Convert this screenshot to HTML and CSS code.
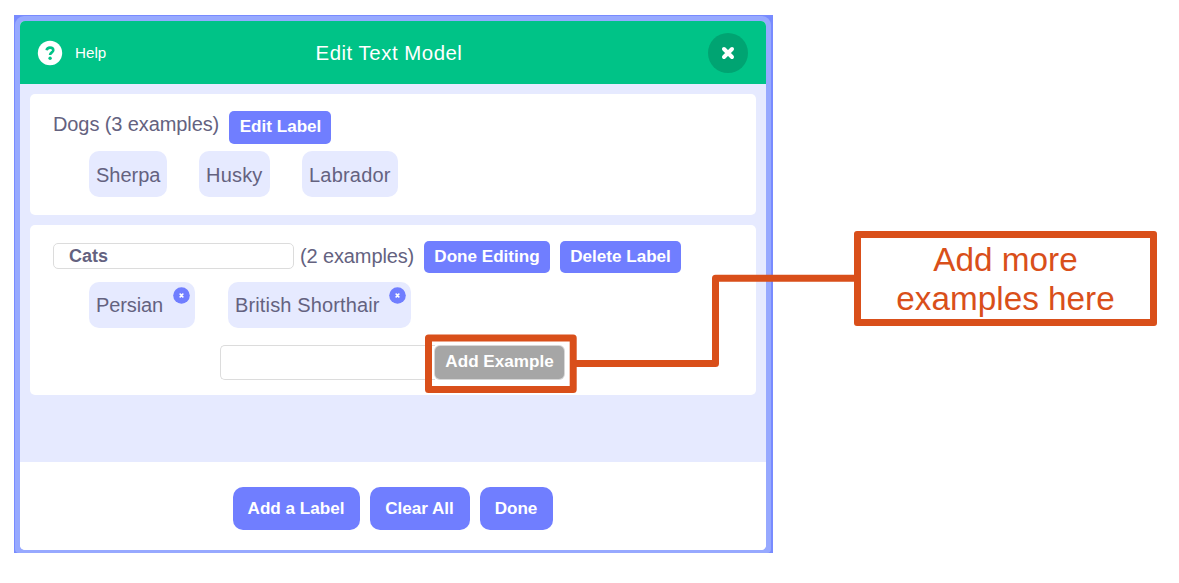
FILE: index.html
```html
<!DOCTYPE html>
<html lang="en">
<head>
<meta charset="utf-8">
<title>Edit Text Model</title>
<link rel="stylesheet" href="styles.css">
</head>
<body>
<div class="frame">
  <div class="rim">
    <main class="modal">
      <header class="header">
        <div class="help">
          <svg class="help-icon" width="26" height="26" viewBox="0 0 26 26"><circle cx="13" cy="13" r="12.2" fill="#fff"/><path d="M9.6 10.3C10 8.4 11.2 7.6 13 7.6C15.1 7.6 16.3 8.7 16.3 10.2C16.3 12.3 13.1 12.5 13.1 15" fill="none" stroke="#00c387" stroke-width="2.6"/><circle cx="13.1" cy="18.2" r="1.7" fill="#00c387"/></svg>
          <span>Help</span>
        </div>
        <h1 class="title">Edit Text Model</h1>
        <div class="close"><svg width="14" height="14" viewBox="0 0 14 14"><path d="M3 3L11 11M11 3L3 11" stroke="#fff" stroke-width="4" stroke-linecap="round"/></svg></div>
      </header>
      <div class="content">
        <section class="card card-dogs">
          <div class="row"><span class="count">Dogs (3 examples)</span><button class="button edit">Edit Label</button></div>
          <div class="chips dogs"><span class="chip">Sherpa</span><span class="chip husky">Husky</span><span class="chip labrador">Labrador</span></div>
        </section>
        <section class="card card-cats">
          <div class="row"><div class="name-field">Cats</div><span class="count">(2 examples)</span><button class="button done-editing">Done Editing</button><button class="button delete">Delete Label</button></div>
          <div class="chips cats">
            <span class="chip persian">Persian<svg class="remove" width="17" height="17" viewBox="0 0 17 17"><circle cx="8.5" cy="8.5" r="8.3" fill="#707eff"/><path d="M7.2 7.2L9.8 9.8M9.8 7.2L7.2 9.8" stroke="#fff" stroke-width="1.7" stroke-linecap="round"/></svg></span>
            <span class="chip shorthair">British Shorthair<svg class="remove" width="17" height="17" viewBox="0 0 17 17"><circle cx="8.5" cy="8.5" r="8.3" fill="#707eff"/><path d="M7.2 7.2L9.8 9.8M9.8 7.2L7.2 9.8" stroke="#fff" stroke-width="1.7" stroke-linecap="round"/></svg></span>
          </div>
          <div class="add-row"><div class="example-field"></div><button class="button add">Add Example</button></div>
        </section>
      </div>
      <footer class="footer"><button class="button large label">Add a Label</button><button class="button large clear">Clear All</button><button class="button large done">Done</button></footer>
    </main>
  </div>
</div>
<svg class="connector" width="1179" height="583" viewBox="0 0 1179 583"><g fill="none" stroke="#d94f1a" stroke-width="7" stroke-linejoin="round"><rect x="428.5" y="338" width="144.7" height="51.5"/><path d="M574 363.5H715.5V278.3H858"/></g></svg>
<aside class="callout">Add more<br>examples here</aside>
</body>
</html>
```
FILE: styles.css
```css
* { box-sizing: border-box; }
body {
  margin: 0;
  width: 1179px;
  height: 583px;
  padding: 15px 0 0 14px;
  overflow: hidden;
  background: #fff;
  color: #64627f;
  font: 20px/24px "Liberation Sans", Arial, sans-serif;
}
.frame { width: 759px; height: 538px; padding: 1px 2px 0 1px; background: #788bff; }
.rim { height: 537px; padding: 5px 5px 2px; background: #97a9ff; border-radius: 9px 9px 4px 4px; }
.modal { display: flex; flex-direction: column; width: 746px; height: 529px; overflow: hidden; border-radius: 5px; background: #fff; }
.header {
  display: grid;
  grid-template-columns: 200px 1fr 200px;
  align-items: center;
  height: 63px;
  padding: 0 18px 0 17px;
  background: #00c387;
  color: #fff;
}
.help { display: flex; align-items: center; gap: 12px; font-size: 15.2px; }
.title { margin: 0; padding-right: 7px; text-align: center; font-size: 20.4px; font-weight: 400; letter-spacing: 0.52px; }
.close { display: grid; place-items: center; justify-self: end; width: 40px; height: 40px; border-radius: 50%; background: #00a472; }
.content { height: 378px; padding: 10px; background: #e6eaff; }
.card { width: 726px; background: #fff; border-radius: 5px; }
.card-dogs { height: 121px; padding: 17px 23px; }
.card-cats { height: 170px; margin-top: 10px; padding: 16px 23px; }
.row { display: flex; align-items: center; height: 32px; }
.count { white-space: nowrap; letter-spacing: -0.1px; }
.card-dogs .count { width: 176px; margin-top: -7px; }
.card-cats .count { width: 124px; margin-left: 6px; margin-top: -2px; letter-spacing: -0.12px; }
.button {
  display: flex;
  align-items: center;
  justify-content: center;
  height: 32px;
  padding: 0;
  border: 0;
  border-radius: 5px;
  background: #707eff;
  color: #fff;
  font: bold 17.1px/20px "Liberation Sans", Arial, sans-serif;
  white-space: nowrap;
}
.edit { width: 102px; height: 33px; padding-left: 1px; }
.done-editing { width: 126px; }
.delete { width: 121px; margin-left: 10px; }
.name-field { width: 241px; height: 26px; margin-top: -3px; padding-left: 15px; border: 1.5px solid #dcdcdc; border-radius: 5px; font-weight: 700; font-size: 18px; line-height: 24px; }
.chips { display: flex; padding-left: 36px; }
.dogs { gap: 32px; margin-top: 8px; }
.cats { gap: 33px; margin-top: 9px; }
.chip { display: flex; width: 78px; height: 46px; padding: 12px 7px 0; border-radius: 10px; background: #e6eaff; white-space: nowrap; }
.husky { width: 71px; letter-spacing: 0.2px; }
.labrador { width: 96px; letter-spacing: 0.2px; }
.persian { width: 106px; letter-spacing: -0.1px; }
.shorthair { width: 183px; letter-spacing: 0.14px; }
.cats .chip { justify-content: space-between; padding: 11px 5px 0 7px; }
.remove { flex: none; margin-top: -6px; }
.add-row { display: flex; padding-left: 167px; margin-top: 17px; }
.example-field { width: 215px; height: 35px; border: 1.5px solid #dcdcdc; border-right: 0; border-radius: 5px 0 0 5px; }
.add { width: 129px; height: 33px; margin-top: 1px; padding-bottom: 1px; background: #a6a6a6; box-shadow: 0 0 0 1px #d8d8d8; }
.footer { display: flex; flex: 1; justify-content: center; gap: 10px; padding-top: 25px; padding-right: 1px; background: #fff; }
.large { height: 43px; border-radius: 10px; }
.label { width: 127px; }
.clear { width: 100px; }
.done { width: 73px; }
.connector { position: absolute; left: 0; top: 0; }
.callout { position: absolute; left: 854px; top: 231px; width: 303px; height: 95px; padding-top: 2px; border: 7px solid #d94f1a; border-radius: 3px; text-align: center; color: #d94f1a; font-size: 33.3px; line-height: 39px; }
```
